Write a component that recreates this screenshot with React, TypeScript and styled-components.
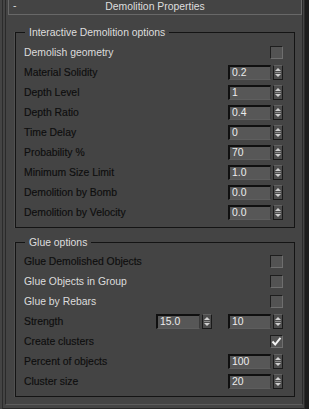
import styled, { createGlobalStyle } from "styled-components";

const GlobalStyle = createGlobalStyle`
	html, body {
		margin: 0;
		padding: 0;
		background: #444444;
	}
	body {
		font-family: "Liberation Sans", Arial, sans-serif;
		font-size: 10.4px;
	}
`;

const Shell = styled.div`
	box-sizing: border-box;
	width: 309px;
	height: 409px;
	padding-left: 2px;
	background: #444444;
	border-right: 4px solid #1c1c1c;
	display: flex;
	overflow: hidden;
`;

const Frame = styled.div`
	flex: 1;
	display: flex;
	border-left: 1px solid #2c2c2c;
	border-right: 1px solid #2c2c2c;
	border-bottom: 1px solid #262626;
	padding: 0 1px 1px 2px;
`;

const Rollout = styled.div`
	flex: 1;
	display: flex;
	flex-direction: column;
	border-left: 1px solid #2a2a2a;
	border-right: 1px solid #2a2a2a;
	border-bottom: 1px solid #5c5c5c;
	margin-bottom: 2px;
`;

const TitleBar = styled.div`
	position: relative;
	height: 14px;
	margin: 0 0 0 2px;
	border-left: 1px solid #686868;
	border-right: 1px solid #686868;
	border-bottom: 1px solid #686868;
	display: flex;
	align-items: center;
	justify-content: center;
	color: #dedede;
	line-height: 14px;
`;

const Collapse = styled.span`
	position: absolute;
	left: 4px;
	top: -1px;
	color: #dedede;
`;

const Body = styled.div`
	display: flex;
	flex-direction: column;
	padding: 17px 7px 0 9px;
`;

const Group = styled.div<{ $top?: number; $padTop: number }>`
	position: relative;
	border: 1px solid #141414;
	box-shadow: -1px 0 0 #505050;
	margin-top: ${({ $top }) => $top ?? 0}px;
	padding: ${({ $padTop }) => $padTop}px 11px 5px 8px;
	display: flex;
	flex-direction: column;
`;

const Legend = styled.span`
	position: absolute;
	top: -8px;
	left: 9px;
	padding: 0 4px;
	background: #444444;
	color: #dedede;
	line-height: 15px;
`;

const Row = styled.div`
	height: 20px;
	display: flex;
	align-items: center;
	gap: 16px;
`;

const Label = styled.span<{ $light?: boolean }>`
	flex: 1;
	color: ${({ $light }) => ($light ? "#dcdcdc" : "#0e0e0e")};
	-webkit-text-stroke: ${({ $light }) => ($light ? "0" : "0.15px #0e0e0e")};
	white-space: nowrap;
`;

const Spinner = styled.div`
	display: flex;
	align-items: center;
	gap: 2px;
`;

const Field = styled.div<{ $width: number }>`
	box-sizing: border-box;
	width: ${({ $width }) => $width}px;
	height: 15px;
	background: #575757;
	border-top: 2px solid #101010;
	border-left: 2px solid #101010;
	border-bottom: 1px solid #5e5e5e;
	border-right: 1px solid #3a3a3a;
	color: #ececec;
	padding-left: 2px;
	line-height: 12px;
`;

const Arrows = styled.div`
	box-sizing: border-box;
	width: 10px;
	height: 15px;
	background: #4c4c4c;
	border: 1px solid #1a1a1a;
	border-top-color: #606060;
	display: flex;
	align-items: center;
	justify-content: center;
`;

const Box = styled.div`
	box-sizing: border-box;
	width: 13px;
	height: 13px;
	background: #535353;
	border-top: 1px solid #1e1e1e;
	border-left: 1px solid #1e1e1e;
	border-bottom: 1px solid #6e6e6e;
	border-right: 1px solid #6e6e6e;
	display: flex;
	align-items: center;
	justify-content: center;
`;

const SpinArrows = () => (
	<Arrows>
		<svg width="8" height="13" viewBox="0 0 8 13">
			<path d="M4 2 L7 5 L1 5 Z" fill="#d0d0d0" />
			<line x1="1" y1="6.5" x2="7" y2="6.5" stroke="#8a8a8a" strokeWidth="1" />
			<path d="M1 8 L7 8 L4 11 Z" fill="#d0d0d0" />
		</svg>
	</Arrows>
);

const NumberSpinner = ({ value, width = 43 }: { value: string; width?: number }) => (
	<Spinner>
		<Field $width={width}>{value}</Field>
		<SpinArrows />
	</Spinner>
);

const CheckBox = ({ checked }: { checked?: boolean }) => (
	<Box>
		{checked && (
			<svg width="11" height="11" viewBox="0 0 11 11">
				<path d="M1.5 5.5 L4.2 8.5 L9.5 1.8" stroke="#f2f2f2" strokeWidth="2" fill="none" />
			</svg>
		)}
	</Box>
);

type Item = { label: string; light?: boolean; value?: string; checkbox?: boolean; checked?: boolean };

const demolition: Item[] = [
	{ label: "Demolish geometry", light: true, checkbox: true },
	{ label: "Material Solidity", value: "0.2" },
	{ label: "Depth Level", value: "1" },
	{ label: "Depth Ratio", value: "0.4" },
	{ label: "Time Delay", value: "0" },
	{ label: "Probability %", value: "70" },
	{ label: "Minimum Size Limit", value: "1.0" },
	{ label: "Demolition by Bomb", value: "0.0" },
	{ label: "Demolition by Velocity", value: "0.0" },
];

const glueBefore: Item[] = [
	{ label: "Glue Demolished Objects", checkbox: true },
	{ label: "Glue Objects in Group", light: true, checkbox: true },
	{ label: "Glue by Rebars", light: true, checkbox: true },
];

const glueAfter: Item[] = [
	{ label: "Create clusters", checkbox: true, checked: true },
	{ label: "Percent of objects", value: "100" },
	{ label: "Cluster size", value: "20" },
];

const renderRow = (item: Item) => (
	<Row key={item.label}>
		<Label $light={item.light}>{item.label}</Label>
		{item.checkbox ? <CheckBox checked={item.checked} /> : <NumberSpinner value={item.value ?? ""} />}
	</Row>
);

export default function App() {
	return (
		<>
			<GlobalStyle />
			<Shell>
				<Frame>
					<Rollout>
						<TitleBar>
							<Collapse>-</Collapse>
							Demolition Properties
						</TitleBar>
						<Body>
							<Group $padTop={9}>
								<Legend>Interactive Demolition options</Legend>
								{demolition.map(renderRow)}
							</Group>
							<Group $top={14} $padTop={8}>
								<Legend>Glue options</Legend>
								{glueBefore.map(renderRow)}
								<Row>
									<Label>Strength</Label>
									<NumberSpinner value="15.0" width={44} />
									<NumberSpinner value="10" />
								</Row>
								{glueAfter.map(renderRow)}
							</Group>
						</Body>
					</Rollout>
				</Frame>
			</Shell>
		</>
	);
}
